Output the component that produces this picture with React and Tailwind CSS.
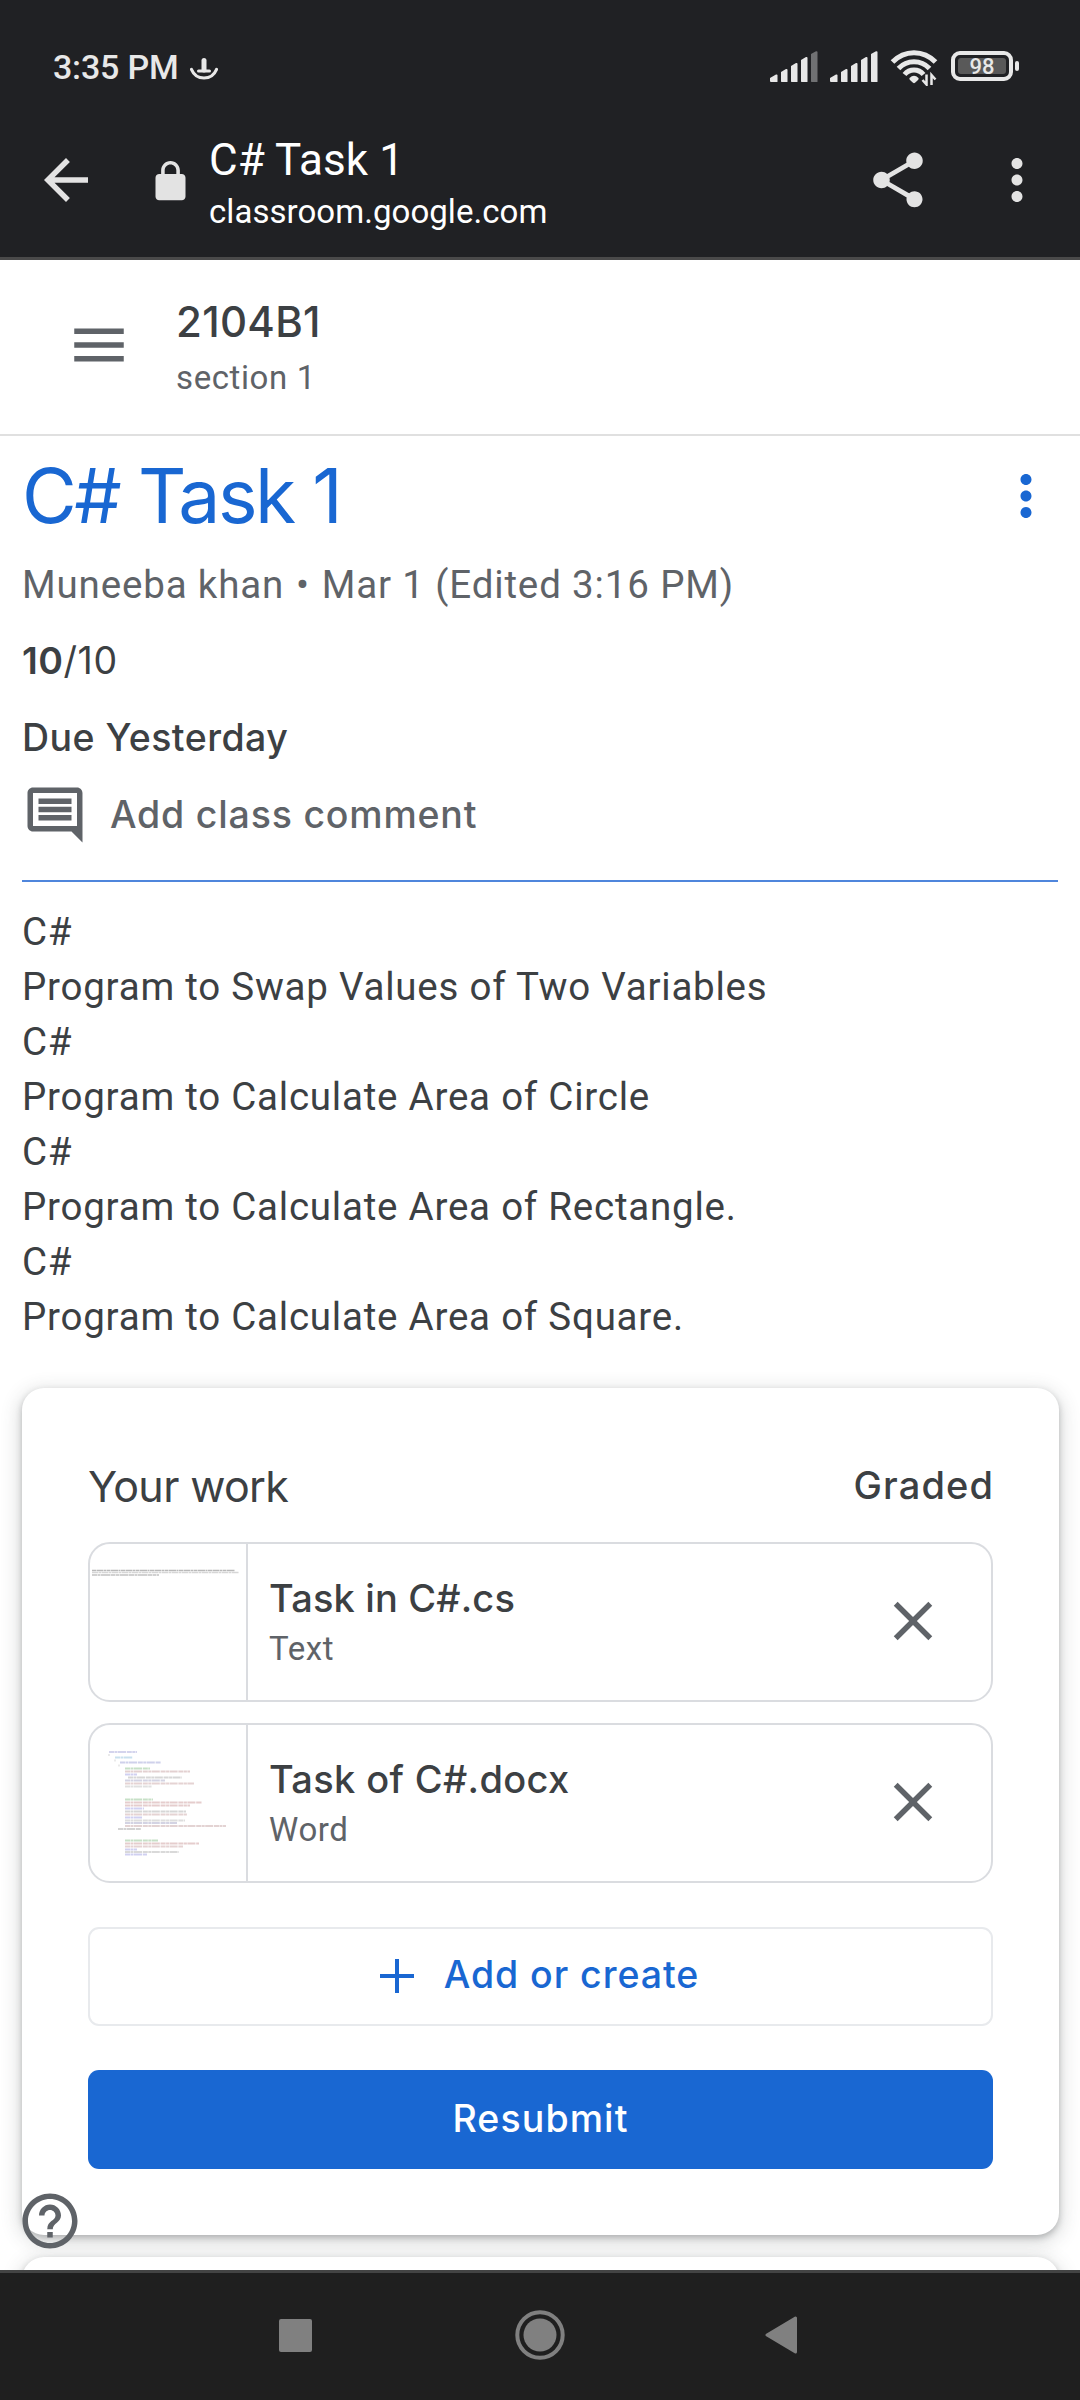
import React from "react";

const GS = "font-['Inter',sans-serif]";

function Icon({ d, className }) {
  return (
    <svg viewBox="0 0 24 24" className={`size-[66px] shrink-0 fill-current ${className || ""}`}>
      <path d={d} />
    </svg>
  );
}

const paths = {
  back: "M20 11H7.83l5.59-5.59L12 4l-8 8 8 8 1.41-1.41L7.83 13H20v-2z",
  lock: "M18 8h-1V6c0-2.76-2.24-5-5-5S7 3.24 7 6v2H6c-1.1 0-2 .9-2 2v10c0 1.1.9 2 2 2h12c1.1 0 2-.9 2-2V10c0-1.1-.9-2-2-2zM8.9 6c0-1.71 1.39-3.1 3.1-3.1s3.1 1.39 3.1 3.1v2H8.9V6z",
  share:
    "M18 16.08c-.76 0-1.44.3-1.96.77L8.91 12.7c.05-.23.09-.46.09-.7s-.04-.47-.09-.7l7.05-4.11c.54.5 1.25.81 2.04.81 1.66 0 3-1.34 3-3s-1.34-3-3-3-3 1.34-3 3c0 .24.04.47.09.7L8.04 9.81C7.5 9.31 6.79 9 6 9c-1.66 0-3 1.34-3 3s1.34 3 3 3c.79 0 1.5-.31 2.04-.81l7.12 4.16c-.05.21-.08.43-.08.65 0 1.61 1.31 2.92 2.92 2.92s2.92-1.31 2.92-2.92-1.31-2.92-2.92-2.92z",
  more: "M12 8c1.1 0 2-.9 2-2s-.9-2-2-2-2 .9-2 2 .9 2 2 2zm0 2c-1.1 0-2 .9-2 2s.9 2 2 2 2-.9 2-2-.9-2-2-2zm0 6c-1.1 0-2 .9-2 2s.9 2 2 2 2-.9 2-2-.9-2-2-2z",
  menu: "M3 18h18v-2H3v2zm0-5h18v-2H3v2zm0-7v2h18V6H3z",
  comment:
    "M21.99 4c0-1.1-.89-2-1.99-2H4c-1.1 0-2 .9-2 2v12c0 1.1.9 2 2 2h14l4 4-.01-18zM20 4v12H4V4h16zM6 12h12v2H6zm0-3h12v2H6zm0-3h12v2H6z",
  close:
    "M19 6.41L17.59 5 12 10.59 6.41 5 5 6.41 10.59 12 5 17.59 6.41 19 12 13.41 17.59 19 19 17.59 13.41 12z",
  help: "M11 18h2v-2h-2v2zm1-16C6.48 2 2 6.48 2 12s4.48 10 10 10 10-4.48 10-10S17.52 2 12 2zm0 18c-4.41 0-8-3.59-8-8s3.59-8 8-8 8 3.59 8 8-3.59 8-8 8zm0-14c-2.21 0-4 1.79-4 4h2c0-1.1.9-2 2-2s2 .9 2 2c0 2-3 1.75-3 5h2c0-2.25 3-2.5 3-5 0-2.21-1.79-4-4-4z",
};

function Signal({ weak }) {
  return (
    <svg viewBox="0 0 48 32" className="h-[32px] w-[48px] fill-[#e8e8e8]">
      <path d="M0 30V27L6 23.5Q7.5 23 7.500 24.500V30.500Q7.500 31 7 31H1Q0 31 0 30Z" />
      <path d="M11 30.500V21L16 18Q17.500 17.500 17.500 19V30.500Q17.500 31 17 31H11.500Z" />
      <path d="M21 30.500V15L26 12Q27.500 11.500 27.500 13V30.500Q27.500 31 27 31H21.500Z" />
      <path d="M31 30.500V9L36 6Q37.500 5.500 37.500 7V30.500Q37.500 31 37 31H31.500Z" />
      <path fill={weak ? "#707173" : "#e8e8e8"} d="M41 30.500V3L46 .2Q47.500 0 47.500 1V30.500Q47.500 31 47 31H41.500Z" />
    </svg>
  );
}

function StatusBar() {
  return (
    <div className="flex h-[104px] items-start pt-[44px] pr-[61px] pl-[53px] text-[#e8e8e8]">
      <span className="text-[34px] leading-[46px] font-medium tracking-[-0.2px]">3:35 PM</span>
      <svg viewBox="0 0 28 22" className="mt-[14px] ml-[12px] h-[22px] w-[28px]">
        <path d="M14 2.500V12" stroke="#e8e8e8" strokeWidth="5" strokeLinecap="round" fill="none" />
        <path d="M8.500 13H19.500" stroke="#e8e8e8" strokeWidth="3" strokeLinecap="round" fill="none" />
        <path d="M1.500 11.500C4 17.500 8 20 14 20S24 17.500 26.500 11.500" stroke="#e8e8e8" strokeWidth="3.200" strokeLinecap="round" fill="none" />
      </svg>
      <div className="ml-auto flex pt-[7px]">
        <Signal weak />
        <div className="ml-[12px]">
          <Signal />
        </div>
        <svg viewBox="0 0 48 38" className="-mt-[3px] ml-[12px] h-[38px] w-[48px]">
          <g fill="none" stroke="#e8e8e8" strokeWidth="5">
            <path d="M2.500 14C14.500 1.500 33.500 1.500 45.500 14" />
            <path d="M8.500 20.500C17 11.500 31 11.500 39.500 20.500" />
            <path d="M14.500 26.500C19.500 20.500 28.500 20.500 33.500 26.500" />
          </g>
          <path d="M19.500 30Q24 25.500 28.500 30Q29 31 28 32L25 34.800Q24 35.500 23 34.800L20 32Q19 31 19.500 30Z" fill="#e8e8e8" />
          <path d="M36.500 26.500V36.500L32.500 32M41.500 37V27L45.500 31.500" fill="none" stroke="#e8e8e8" strokeWidth="2.500" />
        </svg>
        <div className="ml-[13px] flex h-[30px] w-[62px] rounded-[9px] border-4 border-[#e8e8e8] p-[3px]">
          <div className="flex flex-1 items-center justify-center rounded-[3px] bg-[#595959] pt-[2px] text-[22px] leading-none font-medium">98</div>
        </div>
        <div className="mt-[10px] ml-[2px] h-[10px] w-[4px] rounded-full bg-[#e8e8e8]" />
      </div>
    </div>
  );
}

function BrowserBar() {
  return (
    <div className="flex h-[153px] items-start pt-[43px] pr-[30px] pl-[33px] text-[#e3e3e3]">
      <Icon d={paths.back} />
      <svg viewBox="0 0 24 24" className="mt-[12px] ml-[49px] size-[45px] fill-current">
        <path d={paths.lock} />
      </svg>
      <div className="-mt-[13px] ml-[16px] text-white">
        <div className="text-[44px] leading-[52px] tracking-[0.1px]">C# Task 1</div>
        <div className="mt-[5px] text-[33px] leading-[42px] tracking-[0.05px]">classroom.google.com</div>
      </div>
      <Icon d={paths.share} className="ml-auto" />
      <Icon d={paths.more} className="ml-[53px]" />
    </div>
  );
}

/* Rows of a document preview: [x, y, width, colour] */
const docRows = [
  [19, 27, 28, "#c9c9e8"], [25, 32.5, 18, "#bcd8ea"], [30, 37.5, 41, "#c3c5e6"],
  [35, 43.5, 25, "#b9d8b9"], [35, 46.5, 65, "#dcc4c4"], [35, 49.5, 12, "#c4c4ee"],
  [38, 52.5, 54, "#cccccc"], [35, 55.5, 40, "#c8c8dc"], [35, 58.5, 69, "#dfc8c8"], [35, 61.5, 27, "#d8d8d8"],
  [35, 74.5, 28, "#b9d8b9"], [35, 77.5, 77, "#dfc0c0"], [35, 80.5, 65, "#dfc0c0"], [35, 83.5, 19, "#c4c4ee"],
  [35, 86.5, 61, "#cccccc"], [35, 89.5, 62, "#dfc8c8"], [35, 92.5, 17, "#c4c4ee"], [35, 95.5, 60, "#d4d4d4"],
  [35, 98, 52, "#c8c8dc"], [35, 101, 101, "#dcc8c8"], [28, 104, 23, "#c8c8c8"],
  [35, 115.5, 33, "#b9d8b9"], [35, 118.5, 74, "#dfc0c0"], [35, 121.5, 58, "#dfc8c8"], [35, 124.5, 12, "#c4c4ee"],
  [35, 127, 54, "#d0d0d0"], [35, 129.5, 22, "#c4c4ee"],
];

function DocPreview() {
  return (
    <svg viewBox="0 0 156 156" className="h-full w-full">
      {docRows.map(([x, y, w, c]) => (
        <line key={y} x1={x} x2={x + w} y1={y} y2={y} stroke={c} strokeWidth="2" strokeOpacity=".8" strokeDasharray="5 .5 3 .5 8 .8" />
      ))}
      <path d="M19 29V31M25 34.500V36.500M29 39.500V41.500" stroke="#d5d5d5" />
    </svg>
  );
}

function TextPreview() {
  return (
    <svg viewBox="0 0 156 156" className="h-full w-full" fill="none" strokeWidth="1.500">
      <path d="M2 26.500H145" stroke="#b9b9b9" strokeDasharray="4 .5 7 .5 2 .5" />
      <path d="M2 28.500H149" stroke="#d6d6d6" strokeDasharray="6 .5 3 .5" />
      <path d="M2 31H69" stroke="#c2c2c2" strokeDasharray="5 .5 3 .5 9 .5" />
    </svg>
  );
}

function Attachment({ name, type, preview, nameSpacing }) {
  return (
    <div className="flex h-[160px] rounded-[22px] border-2 border-[#dadce0]">
      <div className="w-[158px] shrink-0 border-r-2 border-[#dadce0]">{preview}</div>
      <div className="pt-[26px] pl-[21px]">
        <div className={`${GS} ${nameSpacing} text-[38px] leading-[56px] font-medium text-[#3c4043]`}>{name}</div>
        <div className="mt-px text-[33px] leading-[44px] tracking-[0.6px] text-[#5f6368]">{type}</div>
      </div>
      <Icon d={paths.close} className="mt-[44px] mr-[45px] ml-auto text-[#5f6368]" />
    </div>
  );
}

const description = [
  "C#",
  "Program to Swap Values of Two Variables",
  "C#",
  "Program to Calculate Area of Circle",
  "C#",
  "Program to Calculate Area of Rectangle.",
  "C#",
  "Program to Calculate Area of Square.",
];

const cardShadow = "shadow-[0_3px_6px_rgba(60,64,67,0.3),0_5px_17px_5px_rgba(60,64,67,0.15)]";

export default function App() {
  return (
    <div className="flex h-[2400px] w-[1080px] flex-col overflow-hidden bg-white font-['Roboto',sans-serif] text-[#3c4043]">
      <header className="h-[260px] shrink-0 border-b-[3px] border-[#4a4a4a] bg-[#202124]">
        <StatusBar />
        <BrowserBar />
      </header>

      <main className="relative h-[2010px] shrink-0 overflow-hidden">
        <div className="flex h-[176px] items-start border-b-2 border-[#e0e0e0] pl-[66px]">
          <Icon d={paths.menu} className="mt-[52px] text-[#5f6368]" />
          <div className="ml-[44px] pt-[36px]">
            <div className={`${GS} text-[42px] leading-[52px] font-medium tracking-[0.3px]`}>2104B1</div>
            <div className="mt-[8px] text-[33px] leading-[44px] tracking-[0.6px] text-[#5f6368]">section 1</div>
          </div>
        </div>

        <section className="mx-[22px] h-[446px] border-b-2 border-[#4f86dc]">
          <div className="flex items-start justify-between">
            <h1 className={`${GS} pt-[10px] text-[75px] leading-[99px] tracking-[-2.5px] text-[#1967d2]`}>C# Task 1</h1>
            <Icon d={paths.more} className="-mr-px mt-[27px] text-[#1967d2]" />
          </div>
          <div className="mt-[12px] text-[38.5px] leading-[55px] tracking-[0.85px] text-[#5f6368]">
            Muneeba khan <span className="mx-[1.5px]">•</span> Mar 1 (Edited 3:16 PM)
          </div>
          <div className={`${GS} mt-[21px] text-[37.5px] leading-[55px] tracking-[0.5px]`}>
            <b className="font-semibold">10</b>/10
          </div>
          <div className={`${GS} mt-[22px] text-[37.5px] leading-[55px] font-medium tracking-[0.45px]`}>Due Yesterday</div>
          <div className="mt-[17px] flex items-center">
            <Icon d={paths.comment} className="text-[#5f6368]" />
            <span className={`${GS} -mt-[2px] ml-[22px] text-[37.5px] leading-[55px] font-medium tracking-[0.8px] text-[#5f6368]`}>Add class comment</span>
          </div>
        </section>

        <section className="mx-[22px] pt-[22px] text-[38.5px] leading-[55px] tracking-[0.77px]">
          {description.map((line, i) => (
            <p key={i}>{line}</p>
          ))}
        </section>

        <section className={`mx-[22px] mt-[44px] h-[847px] w-[1037px] rounded-[22px] bg-white px-[66px] pt-[66px] ${cardShadow}`}>
          <div className={`${GS} flex h-[88px] items-start justify-between`}>
            <h2 className="pt-[2px] text-[43px] leading-[60px] tracking-[-0.65px]">Your work</h2>
            <span className="-mr-px pt-[1px] text-[38px] leading-[60px] font-medium tracking-[1.1px]">Graded</span>
          </div>
          <div className="flex flex-col gap-[21px]">
            <Attachment name="Task in C#.cs" type="Text" preview={<TextPreview />} nameSpacing="tracking-[0.15px]" />
            <Attachment name="Task of C#.docx" type="Word" preview={<DocPreview />} nameSpacing="tracking-[0.35px]" />
          </div>
          <button className={`${GS} mt-[44px] flex h-[99px] w-full items-center justify-center rounded-[11px] border-2 border-[#e8eaed] pr-[2px] pb-[2px] text-[37.5px] font-medium tracking-[0.95px] text-[#1967d2]`}>
            <svg viewBox="0 0 34 34" className="mr-[30px] size-[34px]" stroke="currentColor" strokeWidth="4">
              <path d="M17 0V34M0 17H34" />
            </svg>
            Add or create
          </button>
          <button className={`${GS} mt-[44px] h-[99px] w-full rounded-[11px] bg-[#1967d2] text-[37.5px] font-medium tracking-[1.1px] text-white`}>
            Resubmit
          </button>
        </section>

        <section className={`mx-[22px] mt-[22px] h-[200px] w-[1037px] rounded-[22px] bg-white ${cardShadow}`} />

        <Icon d={paths.help} className="absolute top-[1928px] left-[17px] text-[#5f6368]" />
      </main>

      <nav className="flex h-[130px] shrink-0 items-start border-t-[3px] border-[#434444] bg-[#1f1f1f]">
        <svg viewBox="0 0 33 33" className="mt-[46px] ml-[279px] size-[33px] fill-[#808080]">
          <rect width="33" height="33" rx="2" />
        </svg>
        <svg viewBox="0 0 50 50" className="mt-[37px] ml-[203px] size-[50px]">
          <circle cx="25" cy="25" r="22.700" fill="none" stroke="#808080" strokeWidth="4" />
          <circle cx="25" cy="25" r="16.500" fill="#808080" />
        </svg>
        <svg viewBox="0 0 32 38" className="mt-[43px] ml-[200px] h-[38px] w-[32px]">
          <path d="M2 19L30.500 2V36Z" fill="#808080" stroke="#808080" strokeWidth="3" strokeLinejoin="round" />
        </svg>
      </nav>
    </div>
  );
}
